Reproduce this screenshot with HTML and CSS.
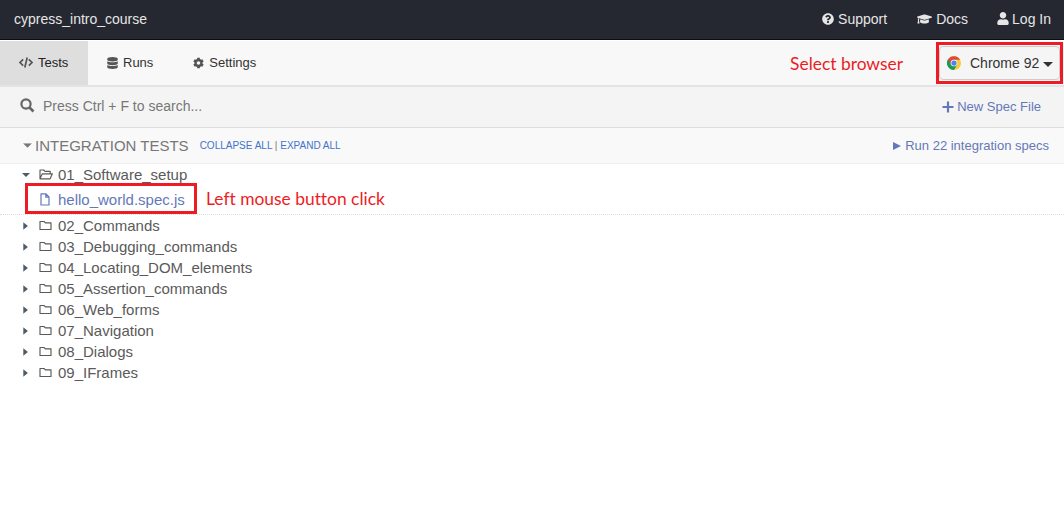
FILE: index.html
```html
<!DOCTYPE html>
<html lang="en">
<head>
<meta charset="utf-8">
<title>cypress_intro_course</title>
<link rel="stylesheet" href="styles.css">
</head>
<body>
<svg class="defs" aria-hidden="true">
  <symbol id="folder" viewBox="0 0 13 11"><path d="M1 9.500V1.500h3.900l1.500 1.300h5.600v6.700z" fill="none" stroke="currentColor" stroke-width="1.150" stroke-linejoin="round"/></symbol>
  <symbol id="right" viewBox="0 0 5 8"><path d="M.3.2v7.600L4.900 4z" fill="currentColor"/></symbol>
  <symbol id="down" viewBox="0 0 10 5"><path d="M0 0h10L5 5z" fill="currentColor"/></symbol>
</svg>
<header class="topbar">
  <span class="project">cypress_intro_course</span>
  <nav class="links">
    <a class="support"><svg width="12" height="12" viewBox="0 0 512 512"><path fill="currentColor" d="M504 256c0 137-111 248-248 248S8 393 8 256 119 8 256 8s248 111 248 248zM262.700 90c-54.500 0-89.300 23-116.500 63.800-3.500 5.300-2.400 12.400 2.700 16.300l34.700 26.300c5.200 3.900 12.600 3 16.700-2.100 17.900-22.700 30.100-35.800 57.300-35.800 20.400 0 45.700 13.100 45.700 33 0 15-12.400 22.700-32.500 34C247.100 238.500 216 254.900 216 296v4c0 6.600 5.400 12 12 12h56c6.600 0 12-5.400 12-12v-1.300c0-28.500 83.200-29.600 83.200-106.700 0-58-60.200-102-116.500-102zM256 338c-25.400 0-46 20.600-46 46s20.600 46 46 46 46-20.600 46-46-20.600-46-46-46z"/></svg><span>Support</span></a>
    <a class="docs"><svg width="15" height="12" viewBox="0 0 640 512"><path fill="currentColor" d="M622.340 153.200L343.400 67.500c-15.200-4.670-31.600-4.670-46.790 0L17.660 153.200c-23.540 7.230-23.540 38.360 0 45.590l48.630 14.940c-10.670 13.190-17.230 29.280-17.880 46.900C38.780 266.150 32 276.110 32 288c0 10.780 5.680 19.850 13.860 25.650L20.330 428.530C18.110 438.520 25.710 448 35.940 448h56.110c10.240 0 17.840-9.480 15.620-19.470L82.140 313.650C90.320 307.850 96 298.780 96 288c0-11.570-6.470-21.250-15.660-26.870.76-15.020 8.440-28.300 20.690-36.720L296.600 284.500c9.060 2.780 26.440 6.250 46.790 0l278.950-85.700c23.550-7.240 23.550-38.360 0-45.600zM352.790 315.090c-28.530 8.760-52.840 3.920-65.590 0l-145.020-44.550L128 384c0 35.350 85.960 64 192 64s192-28.650 192-64l-14.180-113.470-145.030 44.560z"/></svg><span>Docs</span></a>
    <a class="login"><svg width="12" height="13" viewBox="0 0 448 512"><path fill="currentColor" d="M224 256c70.700 0 128-57.300 128-128S294.700 0 224 0 96 57.300 96 128s57.300 128 128 128zm89.600 32h-16.700c-22.200 10.200-46.900 16-72.900 16s-50.600-5.800-72.900-16h-16.700C60.200 288 0 348.200 0 422.400V464c0 26.500 21.500 48 48 48h352c26.500 0 48-21.500 48-48v-41.600c0-74.200-60.200-134.400-134.400-134.400z"/></svg><span>Log In</span></a>
  </nav>
</header>
<div class="tabs">
  <a class="tab active"><svg width="14" height="11" viewBox="0 0 14 11"><path d="M4.200 2.400L1 5.500l3.200 3.100M9.800 2.400L13 5.500 9.800 8.600M8.200.5L5.800 10.500" fill="none" stroke="currentColor" stroke-width="1.700"/></svg><span>Tests</span></a>
  <a class="tab runs"><svg width="11" height="12" viewBox="0 0 448 512"><path fill="currentColor" d="M448 73.100v45.800C448 159.100 347.700 192 224 192S0 159.100 0 118.900V73.100C0 32.900 100.300 0 224 0s224 32.900 224 73.100zM448 176v102.900C448 319.100 347.700 352 224 352S0 319.100 0 278.900V176c48.100 33.100 136.200 48.600 224 48.600S399.900 209.100 448 176zm0 160v102.900C448 479.100 347.700 512 224 512S0 479.100 0 438.900V336c48.100 33.100 136.200 48.600 224 48.600S399.900 369.100 448 336z"/></svg><span>Runs</span></a>
  <a class="tab settings"><svg width="11" height="12" viewBox="0 0 512 512"><path fill="currentColor" d="M487.400 315.700l-42.600-24.600c4.300-23.200 4.300-47 0-70.200l42.600-24.600c4.900-2.800 7.100-8.600 5.500-14-11.100-35.600-30-67.800-54.700-94.600-3.800-4.100-10-5.100-14.800-2.300L380.800 110c-17.900-15.400-38.500-27.300-60.800-35.100V25.800c0-5.600-3.900-10.500-9.400-11.700-36.700-8.200-74.300-7.800-109.200 0-5.500 1.200-9.400 6.100-9.400 11.700V75c-22.200 7.900-42.800 19.800-60.800 35.100L88.700 85.500c-4.900-2.800-11-1.900-14.800 2.300-24.700 26.700-43.600 58.900-54.700 94.600-1.700 5.400.6 11.200 5.500 14L67.300 221c-4.300 23.200-4.300 47 0 70.200l-42.600 24.600c-4.900 2.800-7.100 8.600-5.500 14 11.100 35.600 30 67.800 54.700 94.600 3.800 4.100 10 5.100 14.800 2.300l42.600-24.600c17.900 15.400 38.500 27.300 60.800 35.100v49.200c0 5.600 3.900 10.500 9.400 11.700 36.700 8.200 74.300 7.800 109.200 0 5.500-1.200 9.400-6.100 9.400-11.700v-49.200c22.200-7.900 42.800-19.800 60.800-35.100l42.600 24.600c4.900 2.800 11 1.900 14.800-2.300 24.700-26.700 43.600-58.900 54.700-94.600 1.500-5.500-.7-11.300-5.600-14.100zM256 336c-44.100 0-80-35.900-80-80s35.900-80 80-80 80 35.900 80 80-35.900 80-80 80z"/></svg><span>Settings</span></a>
  <span class="note select-note">Select browser</span>
  <div class="browser-mark"><button class="browser">
    <svg width="14" height="14" viewBox="0 0 48 48"><circle cx="24" cy="24" r="24" fill="#fcc934"/><path d="M24 24L3.200 12A24 24 0 0 0 24 48L34.400 30z" fill="#169c5a"/><path d="M24 13h20.800A24 24 0 0 0 3.200 12l10.400 18z" fill="#db4c3f"/><circle cx="24" cy="24" r="11.500" fill="#f5f5f5"/><circle cx="24" cy="24" r="9" fill="#4d83ec"/></svg>
    <span>Chrome 92</span><svg class="caret" width="10" height="5"><use href="#down"/></svg>
  </button></div>
</div>
<div class="search">
  <svg class="glass" width="15" height="15" viewBox="0 0 15 15"><circle cx="6" cy="6" r="4.600" fill="none" stroke="currentColor" stroke-width="2.200"/><path d="M9.500 9.500l4 4" stroke="currentColor" stroke-width="2.600"/></svg>
  <span class="placeholder">Press Ctrl + F to search...</span>
  <a class="new-spec"><svg width="12" height="12" viewBox="0 0 12 12"><path d="M6 .5v11M.5 6h11" stroke="currentColor" stroke-width="2.200"/></svg><span>New Spec File</span></a>
</div>
<div class="group">
  <svg width="9" height="5" viewBox="0 0 10 5"><use href="#down"/></svg>
  <h1>INTEGRATION TESTS</h1>
  <span class="toggles"><a>COLLAPSE ALL</a> | <a>EXPAND ALL</a></span>
  <a class="run"><svg width="8" height="8" viewBox="0 0 8 8"><path d="M0 0v8l8-4z" fill="currentColor"/></svg><span>Run 22 integration specs</span></a>
</div>
<ul class="tree">
  <li class="row open"><svg class="arrow" width="8" height="4" viewBox="0 0 10 5"><path d="M0 0h10L5 5z" fill="currentColor"/></svg><svg class="folder" width="14" height="11" viewBox="0 0 14 11"><path d="M1 9.800V1h3.700l1.300 1.400h5.200v2M1 9.800l2.300-5h10.100l-2.300 5z" fill="none" stroke="currentColor" stroke-width="1.150" stroke-linejoin="round"/></svg><span>01_Software_setup</span></li>
  <li class="file-row"><a class="file"><svg width="10" height="13" viewBox="0 0 10 13"><path d="M1 .8h5L9 4v8H1zM5.800.8v3.400H9" fill="none" stroke="currentColor" stroke-width="1.200" stroke-linejoin="round"/></svg><span>hello_world.spec.js</span></a><span class="note click-note">Left mouse button click</span></li>
  <li class="row"><svg class="arrow" width="5" height="8"><use href="#right"/></svg><svg class="folder" width="13" height="11"><use href="#folder"/></svg><span>02_Commands</span></li>
  <li class="row"><svg class="arrow" width="5" height="8"><use href="#right"/></svg><svg class="folder" width="13" height="11"><use href="#folder"/></svg><span>03_Debugging_commands</span></li>
  <li class="row"><svg class="arrow" width="5" height="8"><use href="#right"/></svg><svg class="folder" width="13" height="11"><use href="#folder"/></svg><span>04_Locating_DOM_elements</span></li>
  <li class="row"><svg class="arrow" width="5" height="8"><use href="#right"/></svg><svg class="folder" width="13" height="11"><use href="#folder"/></svg><span>05_Assertion_commands</span></li>
  <li class="row"><svg class="arrow" width="5" height="8"><use href="#right"/></svg><svg class="folder" width="13" height="11"><use href="#folder"/></svg><span>06_Web_forms</span></li>
  <li class="row"><svg class="arrow" width="5" height="8"><use href="#right"/></svg><svg class="folder" width="13" height="11"><use href="#folder"/></svg><span>07_Navigation</span></li>
  <li class="row"><svg class="arrow" width="5" height="8"><use href="#right"/></svg><svg class="folder" width="13" height="11"><use href="#folder"/></svg><span>08_Dialogs</span></li>
  <li class="row"><svg class="arrow" width="5" height="8"><use href="#right"/></svg><svg class="folder" width="13" height="11"><use href="#folder"/></svg><span>09_IFrames</span></li>
</ul>
</body>
</html>
```

FILE: styles.css
```css
* { box-sizing: border-box; }
body { margin: 0; height: 506px; overflow: hidden; background: #fff; font: 14px/20px "Liberation Sans", Arial, sans-serif; color: #333; white-space: nowrap; }
svg { display: block; flex: none; }
.defs { display: none; }
.topbar { height: 40px; display: flex; align-items: center; justify-content: space-between; padding: 0 13px 2px 14px; background: #252831; border-bottom: 1px solid #0c0d10; color: #e6e6e6; }
.links { display: flex; }
.links a { display: flex; align-items: center; gap: 4px; }
.docs { margin-left: 30px; }
.login { margin-left: 29px; }
.links .login { gap: 3px; }
.tabs { height: 47px; display: flex; background: #f8f8f8; border-bottom: 2px solid #e4e4e4; border-top: 1px solid #fff; font-size: 13px; }
.tab { display: flex; align-items: center; gap: 5px; padding-bottom: 1px; color: #333; }
.tab svg { color: #555; }
.active { width: 88px; padding-left: 19px; background: #dedede; color: #222; }
.runs { margin-left: 19px; }
.settings { margin-left: 40px; }
.note { font-family: Lato, sans-serif; font-size: 17.4px; font-variant-ligatures: none; color: #ed1c24; }
.select-note { margin-left: auto; padding-top: 13px; }
.browser-mark { width: 127px; height: 42px; margin: 1px 1px 0 33px; padding: 1px 0 0; border: 3px solid #ed1c24; }
.browser { display: flex; align-items: center; width: 121px; height: 34px; padding: 0 6px 0 7px; border: 1px solid #ccc; border-radius: 4px; background: #f5f5f5; font: 14px/20px "Liberation Sans", Arial, sans-serif; color: #333; }
.browser span { margin-left: 9px; }
.caret { margin: 3px 0 0 4px; }
.search { height: 41px; display: flex; align-items: center; padding: 0 23px 2px 20px; background: #f4f4f4; border-bottom: 1px solid #ddd; }
.glass { margin-bottom: 2px; color: #666; }
.placeholder { margin-left: 8px; color: #777; }
.new-spec { display: flex; align-items: center; gap: 3px; margin-left: auto; padding-top: 1px; font-size: 13px; color: #6478b8; }
.group { height: 36px; display: flex; align-items: center; padding: 0 15px 0 23px; background: #f9f9f9; border-bottom: 1px solid #eee; color: #777; }
h1 { margin: 0 0 0 3px; font-size: 15px; font-weight: 400; }
.toggles { margin-left: 11px; font-size: 10px; }
.toggles a { color: #3f73c9; }
.run { display: flex; align-items: center; gap: 4px; margin-left: auto; font-size: 13px; color: #6478b8; }
.tree { margin: 0; padding: 0; list-style: none; font-size: 15px; color: #5a5a5a; }
.row { display: flex; align-items: center; height: 21px; padding-left: 23px; }
.arrow { margin-right: 11px; color: #4f5c66; }
.open .arrow { margin-left: -1px; margin-right: 9px; }
.folder { margin-right: 6px; }
.open .folder { margin-right: 5px; }
.file-row { display: flex; height: 30px; padding-left: 25px; border-bottom: 1px dotted #ddd; }
.file { display: flex; align-items: center; width: 172px; height: 31px; margin-top: -2px; border: 3px solid #ed1c24; padding: 2px 0 0 12px; color: #6478b8; }
.file span { margin-left: 8px; }
.click-note { margin: 4px 0 0 9px; }
```
